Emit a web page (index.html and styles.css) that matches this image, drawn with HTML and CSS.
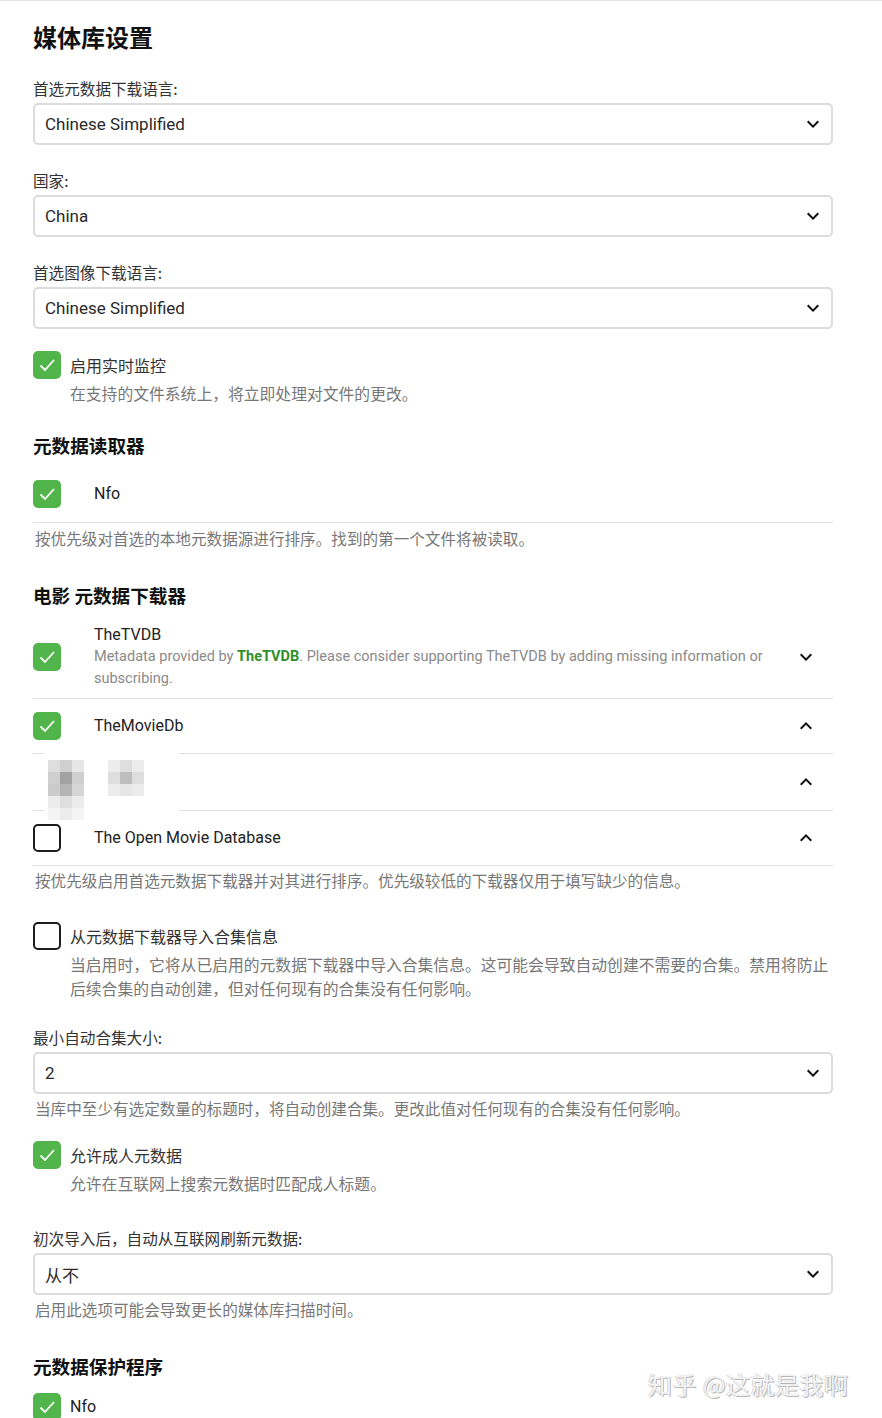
FILE: index.html
```html
<!DOCTYPE html>
<html lang="zh-CN">
<head>
<meta charset="utf-8">
<title>媒体库设置</title>
<link rel="stylesheet" href="styles.css">
</head>
<body>
<div class="page">
  <h1 class="title">媒体库设置</h1>

  <div class="field">
    <div class="label">首选元数据下载语言:</div>
    <div class="select"><span>Chinese Simplified</span><svg class="chev" viewBox="0 0 24 24"><path d="M16.59 8.59L12 13.17 7.41 8.59 6 10l6 6 6-6z"/></svg></div>
  </div>
  <div class="field">
    <div class="label">国家:</div>
    <div class="select"><span>China</span><svg class="chev" viewBox="0 0 24 24"><path d="M16.59 8.59L12 13.17 7.41 8.59 6 10l6 6 6-6z"/></svg></div>
  </div>
  <div class="field">
    <div class="label">首选图像下载语言:</div>
    <div class="select"><span>Chinese Simplified</span><svg class="chev" viewBox="0 0 24 24"><path d="M16.59 8.59L12 13.17 7.41 8.59 6 10l6 6 6-6z"/></svg></div>
  </div>

  <div class="check-field cf1">
    <span class="cb on"><svg viewBox="0 0 28 28"><path d="M7.5 14.5l4.5 4.5 9-10"/></svg></span>
    <div class="cf-text">
      <div class="cf-label">启用实时监控</div>
      <div class="cf-desc">在支持的文件系统上，将立即处理对文件的更改。</div>
    </div>
  </div>

  <h2 class="heading h-reader">元数据读取器</h2>
  <div class="list">
    <div class="row row-nfo">
      <span class="cb on"><svg viewBox="0 0 28 28"><path d="M7.5 14.5l4.5 4.5 9-10"/></svg></span>
      <div class="row-title">Nfo</div>
    </div>
  </div>
  <div class="list-desc">按优先级对首选的本地元数据源进行排序。找到的第一个文件将被读取。</div>

  <h2 class="heading h-dl">电影 元数据下载器</h2>
  <div class="list">
    <div class="row row-tvdb">
      <span class="cb on"><svg viewBox="0 0 28 28"><path d="M7.5 14.5l4.5 4.5 9-10"/></svg></span>
      <div class="row-body">
        <div class="row-title">TheTVDB</div>
        <div class="row-sub">Metadata provided by <b class="link">TheTVDB</b>. Please consider supporting TheTVDB by adding missing information or subscribing.</div>
      </div>
      <svg class="chev row-chev" viewBox="0 0 24 24"><path d="M16.59 8.59L12 13.17 7.41 8.59 6 10l6 6 6-6z"/></svg>
    </div>
    <div class="row">
      <span class="cb on"><svg viewBox="0 0 28 28"><path d="M7.5 14.5l4.5 4.5 9-10"/></svg></span>
      <div class="row-body"><div class="row-title">TheMovieDb</div></div>
      <svg class="chev row-chev" viewBox="0 0 24 24"><path d="M12 8l-6 6 1.41 1.41L12 10.83l4.59 4.58L18 14z"/></svg>
    </div>
    <div class="row row-blur">
      <div class="row-body"></div>
      <svg class="chev row-chev" viewBox="0 0 24 24"><path d="M12 8l-6 6 1.41 1.41L12 10.83l4.59 4.58L18 14z"/></svg>
      <div class="mosaic">
        <div class="pix pix-a">
          <i class="g1"></i><i class="g2"></i><i class="g1b"></i>
          <i class="g2"></i><i class="g4"></i><i class="g2"></i>
          <i class="g2b"></i><i class="g3"></i><i class="g1c"></i>
          <i class="g0"></i><i class="g1"></i><i class="g0"></i>
          <i class="g00"></i><i class="g0"></i><i class="g00"></i>
        </div>
        <div class="pix pix-b">
          <i class="g0"></i><i class="g1"></i><i class="g0"></i>
          <i class="g1"></i><i class="g3b"></i><i class="g1"></i>
          <i class="g0"></i><i class="g1b"></i><i class="g0"></i>
        </div>
      </div>
    </div>
    <div class="row">
      <span class="cb"></span>
      <div class="row-body"><div class="row-title">The Open Movie Database</div></div>
      <svg class="chev row-chev" viewBox="0 0 24 24"><path d="M12 8l-6 6 1.41 1.41L12 10.83l4.59 4.58L18 14z"/></svg>
    </div>
  </div>
  <div class="list-desc ld2">按优先级启用首选元数据下载器并对其进行排序。优先级较低的下载器仅用于填写缺少的信息。</div>

  <div class="check-field cf2">
    <span class="cb"></span>
    <div class="cf-text">
      <div class="cf-label">从元数据下载器导入合集信息</div>
      <div class="cf-desc">当启用时，它将从已启用的元数据下载器中导入合集信息。这可能会导致自动创建不需要的合集。禁用将防止后续合集的自动创建，但对任何现有的合集没有任何影响。</div>
    </div>
  </div>

  <div class="field f4">
    <div class="label">最小自动合集大小:</div>
    <div class="select"><span>2</span><svg class="chev" viewBox="0 0 24 24"><path d="M16.59 8.59L12 13.17 7.41 8.59 6 10l6 6 6-6z"/></svg></div>
    <div class="field-desc">当库中至少有选定数量的标题时，将自动创建合集。更改此值对任何现有的合集没有任何影响。</div>
  </div>

  <div class="check-field cf3">
    <span class="cb on"><svg viewBox="0 0 28 28"><path d="M7.5 14.5l4.5 4.5 9-10"/></svg></span>
    <div class="cf-text">
      <div class="cf-label">允许成人元数据</div>
      <div class="cf-desc">允许在互联网上搜索元数据时匹配成人标题。</div>
    </div>
  </div>

  <div class="field f5">
    <div class="label">初次导入后，自动从互联网刷新元数据:</div>
    <div class="select"><span>从不</span><svg class="chev" viewBox="0 0 24 24"><path d="M16.59 8.59L12 13.17 7.41 8.59 6 10l6 6 6-6z"/></svg></div>
    <div class="field-desc">启用此选项可能会导致更长的媒体库扫描时间。</div>
  </div>

  <h2 class="heading h-saver">元数据保护程序</h2>
  <div class="check-field cf4">
    <span class="cb on"><svg viewBox="0 0 28 28"><path d="M7.5 14.5l4.5 4.5 9-10"/></svg></span>
    <div class="cf-text"><div class="cf-label">Nfo</div></div>
  </div>

  <div class="watermark">知乎 @这就是我啊</div>
</div>
</body>
</html>
```

FILE: styles.css
```css
html, body {
  margin: 0;
  padding: 0;
  background: #fff;
}
body {
  font-family: Roboto, "Noto Sans CJK SC", sans-serif;
  color: #222;
  border-top: 1px solid #e3e3e3;
  height: 1417px;
  overflow: hidden;
}
.page {
  position: relative;
  padding: 20px 0 0 33px;
  width: 800px;
  height: 1397px;
}
.title {
  margin: 0;
  font-size: 24px;
  line-height: 32px;
  font-weight: 700;
  font-family: "Noto Sans CJK SC", sans-serif;
  color: #111;
}
.field { margin-top: 25px; }
.label {
  font-family: "Noto Sans CJK SC", sans-serif;
  font-size: 15.6px;
  line-height: 20px;
  color: #333;
  margin-bottom: 5px;
}
.select {
  box-sizing: border-box;
  height: 42px;
  border: 2px solid #dcdcdc;
  border-radius: 5px;
  display: flex;
  align-items: center;
  justify-content: space-between;
  padding: 0 6px 0 10px;
  font-family: Roboto, "Noto Sans CJK SC", sans-serif;
  font-size: 17px;
  color: #2a2a2a;
}
.chev {
  width: 24px;
  height: 24px;
  fill: #111;
  flex: none;
}
.cb {
  box-sizing: border-box;
  width: 28px;
  height: 28px;
  border: 2px solid #1c1c1c;
  border-radius: 5px;
  flex: none;
  display: block;
}
.cb.on {
  border: none;
  background: #52b54b;
}
.cb svg {
  width: 28px;
  height: 28px;
  display: block;
  fill: none;
  stroke: #fff;
  stroke-width: 1.8;
}
.check-field {
  display: flex;
  align-items: flex-start;
  gap: 9px;
}
.cf-text { flex: 1; }
.cf-label {
  font-family: "Noto Sans CJK SC", sans-serif;
  font-size: 16px;
  line-height: 28px;
  color: #333;
}
.cf-desc {
  font-family: "Noto Sans CJK SC", sans-serif;
  font-size: 15.8px;
  line-height: 24px;
  color: #777;
  margin-top: 3px;
}
.cf1 { margin-top: 22px; }
.heading {
  margin: 0;
  font-family: "Noto Sans CJK SC", sans-serif;
  font-size: 18.6px;
  line-height: 26px;
  font-weight: 700;
  color: #111;
}
.h-reader { margin-top: 26px; }
.h-dl { margin-top: 34px; }
.h-saver { margin-top: 34px; }
.row {
  position: relative;
  display: flex;
  align-items: center;
  min-height: 55px;
  border-bottom: 1px solid #e0e0e0;
  box-sizing: border-box;
}
.row > .cb { margin-right: 33px; }
.row-nfo {
  margin-top: 22px;
  min-height: 0;
  padding-bottom: 14px;
  align-items: flex-start;
}
.row-nfo .row-title { line-height: 28px; }
.row-body { flex: 1; }
.row-title {
  font-size: 16px;
  line-height: 22px;
  color: #222;
}
.row-sub {
  font-size: 14.5px;
  line-height: 22px;
  color: #8a8a8a;
  padding-right: 22px;
}
.link { color: #2f8f2a; font-weight: 700; }
.row-chev { margin-right: 15px; }
.row-tvdb {
  margin-top: 8px;
  padding: 8px 0;
}
.row-blur { min-height: 57px; }
.list-desc {
  font-family: "Noto Sans CJK SC", sans-serif;
  font-size: 15.6px;
  line-height: 20px;
  color: #777;
  margin: 5px 0 0 2px;
}
.ld2 { margin-top: 4px; }
.cf2 { margin-top: 32px; }
.field-desc {
  font-family: "Noto Sans CJK SC", sans-serif;
  font-size: 15.6px;
  line-height: 20px;
  color: #777;
  margin: 4px 0 0 2px;
}
.f4 { margin-top: 26px; }
.cf3 { margin-top: 23px; }
.f5 { margin-top: 32px; }
.cf4 { margin-top: 14px; }
.cf4 .cf-label { color: #222; font-family: Roboto, sans-serif; font-size: 16px; }

.mosaic {
  position: absolute;
  left: 11px;
  top: -5px;
  width: 135px;
  height: 68px;
  background: #fff;
}
.pix {
  position: absolute;
  display: grid;
  grid-template-columns: 12px 12px 12px;
  grid-auto-rows: 12px;
}
.pix i { display: block; }
.pix-a { left: 4px; top: 11px; }
.pix-b { left: 64px; top: 11px; }
.g00 { background: #f4f4f4; }
.g0 { background: #ececec; }
.g1 { background: #dedede; }
.g1b { background: #e6e6e6; }
.g1c { background: #d6d6d6; }
.g2 { background: #cfcfcf; }
.g2b { background: #cbcbcb; }
.g3 { background: #b4b4b4; }
.g3b { background: #bdbdbd; }
.g4 { background: #a2a2a2; }

.watermark {
  position: absolute;
  left: 648px;
  top: 1368px;
  white-space: nowrap;
  font-family: "Noto Sans CJK SC", sans-serif;
  font-size: 24px;
  line-height: 30px;
  color: #f3f3f3;
  text-shadow: 1px 1px 0 #b8b8b8, -1px 0 0 #d8d8d8;
  letter-spacing: 0.5px;
}
```
